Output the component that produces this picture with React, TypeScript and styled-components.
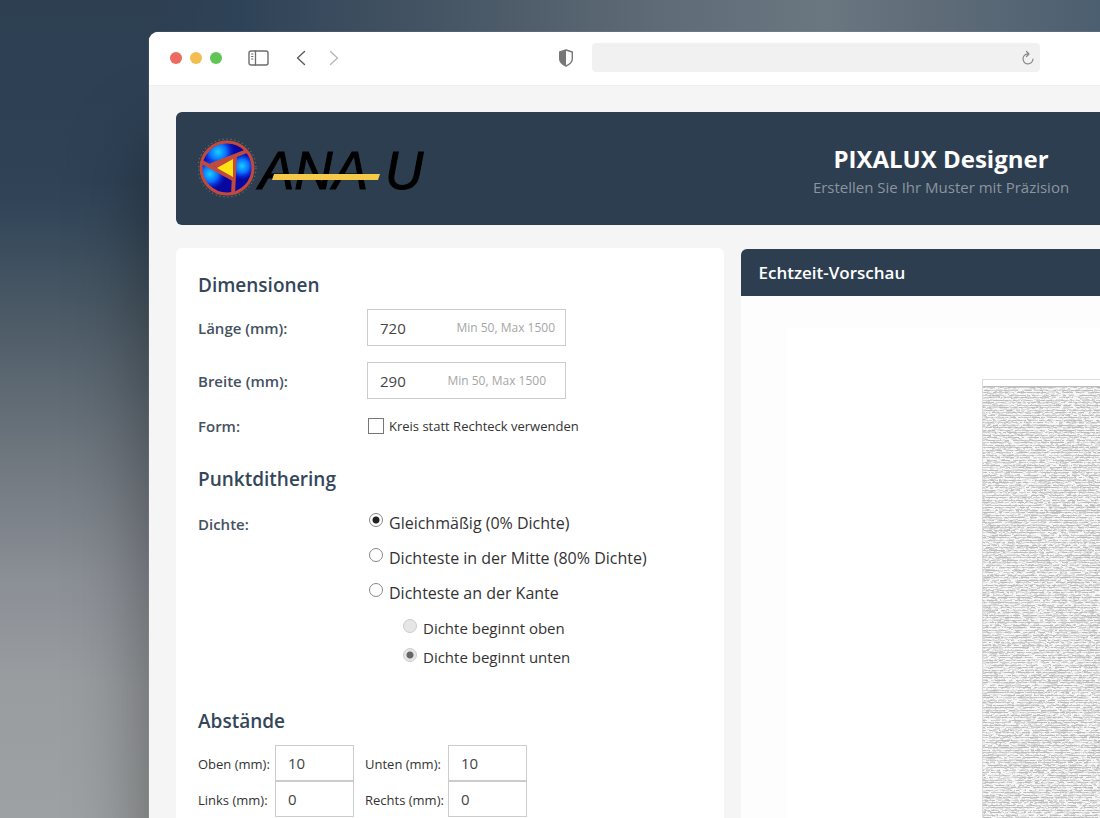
import React, { useState } from "react";
import styled, { createGlobalStyle } from "styled-components";

const navy = "#2d3e50";

const GlobalStyle = createGlobalStyle`
  * { box-sizing: border-box; }
  body {
    margin: 0;
    font-family: "Open Sans", "Noto Sans", sans-serif;
    color: #333;
  }
`;

const Desktop = styled.div`
  height: 100vh;
  overflow: hidden;
  padding: 32px 0 0 149px;
  background:
    linear-gradient(90deg, #2d3e5000 15%, #2f4358 22%, #465564 40%, #5f6c77 60%, #6a7680 75%, #5f6c78 85%, #4c5f70 100%) no-repeat 0 0 / 100% 48px,
    linear-gradient(180deg, #2d3f51 0, #2f4256 22%, #35485a 27%, #4a5965 38%, #6d757d 55%, #8b8f96 71%, #9a9da0 84%, #9ea1a3 100%);
`;

const Window = styled.div`
  width: 144vw;
  min-height: 100%;
  background: #f5f5f5;
  border-radius: 9px 9px 0 0;
  overflow: hidden;
  box-shadow: 0 0 1px rgba(255, 255, 255, 0.7), 0 110px 80px rgba(0, 0, 0, 0.4);
`;

const Toolbar = styled.div`
  display: flex;
  align-items: center;
  height: 54px;
  padding: 0 21px 2px;
  background: #fff;
  border-bottom: 1px solid #f0f0f0;
`;

const Lights = styled.div`
  display: flex;
  gap: 8px;
  margin-right: 26px;
`;

const Light = styled.span<{ $color: string }>`
  width: 12px;
  height: 12px;
  border-radius: 50%;
  background: ${(p) => p.$color};
`;

const IconButton = styled.button`
  display: flex;
  padding: 0;
  border: 0;
  background: none;
`;

const NavGroup = styled.div`
  display: flex;
  gap: 23px;
  margin: 0 219px 0 27px;
`;

const AddressBar = styled.div`
  display: flex;
  align-items: center;
  width: 448px;
  height: 29px;
  margin-left: 18px;
  padding-right: 5px;
  border-radius: 4px;
  background: #f1f1f1;
`;

const AddressInput = styled.input`
  flex: 1;
  min-width: 0;
  height: 100%;
  padding: 0 10px;
  border: 0;
  outline: 0;
  background: transparent;
  font: inherit;
  font-size: 13px;
`;

const Page = styled.div`
  padding: 26px 27px;
`;

const Header = styled.header`
  display: grid;
  grid-template-columns: 1fr auto 1fr;
  align-items: center;
  height: 113px;
  padding: 0 22px;
  border-radius: 6px;
  background: ${navy};
`;

const Titles = styled.div`
  text-align: center;
  padding-top: 4px;
`;

const AppTitle = styled.h1`
  margin: 0;
  color: #fff;
  font-size: 24px;
  font-weight: 700;
  line-height: 32px;
`;

const Tagline = styled.p`
  margin: 0;
  color: #8b959e;
  font-size: 15px;
  line-height: 24px;
`;

const Columns = styled.div`
  display: grid;
  grid-template-columns: 29fr 51fr;
  gap: 17px;
  margin-top: 23px;
`;

const Panel = styled.form`
  padding: 23px 22px 40px;
  border-radius: 6px;
  background: #fff;
`;

const Section = styled.section<{ $gap?: number }>`
  margin-bottom: ${(p) => p.$gap ?? 0}px;
`;

const SectionTitle = styled.h2`
  margin: 0 0 10px;
  color: #34465a;
  font-size: 19px;
  font-weight: 600;
  line-height: 28px;
`;

const Row = styled.div<{ $gap?: number }>`
  display: grid;
  grid-template-columns: 169px 1fr;
  align-items: center;
  margin-bottom: ${(p) => p.$gap ?? 0}px;
`;

const DensityRow = styled(Row)`
  align-items: start;
  padding-top: 3px;
`;

const FieldLabel = styled.label`
  color: #44525f;
  font-size: 15px;
  font-weight: 600;
  line-height: 36px;
`;

const FormLabel = styled.span`
  color: #44525f;
  font-size: 15px;
  font-weight: 600;
  line-height: 24px;
`;

const DensityLabel = styled(FormLabel)`
  line-height: 36px;
`;

const FieldBox = styled.div<{ $inset: number }>`
  display: flex;
  align-items: center;
  width: 199px;
  height: 37px;
  padding: 0 ${(p) => p.$inset}px 0 12px;
  border: 1px solid #ccc;
  background: #fff;
`;

const FieldInput = styled.input`
  flex: 1;
  min-width: 0;
  padding: 0;
  border: 0;
  outline: 0;
  color: #444;
  font: inherit;
  font-size: 15px;
`;

const Hint = styled.span`
  color: #a6a6a6;
  font-size: 12px;
  white-space: nowrap;
`;

const CheckOption = styled.label`
  display: flex;
  align-items: center;
  gap: 5px;
  padding-left: 1px;
  font-size: 13px;
  line-height: 24px;
`;

const Checkbox = styled.input`
  appearance: none;
  width: 16px;
  height: 16px;
  margin: 0;
  border: 1px solid #777;
  background: #fff;
  &:checked { background: ${navy}; }
`;

const Option = styled.label`
  display: flex;
  align-items: flex-start;
  gap: 6px;
  padding-left: 2px;
  color: #333;
  font-size: 16px;
  line-height: 35px;
`;

const SubOptions = styled.div`
  padding: 3px 0 0 34px;
`;

const SubOption = styled(Option)`
  font-size: 15px;
  line-height: 29px;
`;

const Radio = styled.input`
  appearance: none;
  width: 14px;
  height: 14px;
  margin: 7px 0 0;
  border: 1px solid #888;
  border-radius: 50%;
  background: #fff;
  &:checked { background: radial-gradient(circle, #222 0 3px, #fff 4px); }
  &:disabled { margin-top: 5px; border-color: #ccc; background: #e6e6e6; }
  &:disabled:checked { background: radial-gradient(circle, #666 0 3px, #e6e6e6 4px); }
`;

const Margins = styled.div`
  display: grid;
  grid-template-columns: 77px 79px 94px 79px;
  align-items: center;
`;

const MarginLabel = styled.label<{ $second?: boolean }>`
  padding: 2px 0 0 ${(p) => (p.$second ? 11 : 0)}px;
  font-size: 13px;
  line-height: 34px;
  white-space: nowrap;
`;

const MarginInput = styled.input`
  width: 79px;
  height: 36px;
  padding: 0 12px;
  border: 1px solid #ccc;
  outline: 0;
  background: #fff;
  color: #444;
  font: inherit;
  font-size: 15px;
`;

const Preview = styled.section`
  display: flex;
  flex-direction: column;
  margin-top: 1px;
  border-radius: 6px;
  overflow: hidden;
  background: #fdfdfd;
`;

const PreviewTitle = styled.h2`
  margin: 0;
  padding: 0 17px;
  background: ${navy};
  color: #fff;
  font-size: 17px;
  font-weight: 600;
  line-height: 47px;
`;

const PreviewStage = styled.div`
  flex: 1;
  display: flex;
  justify-content: center;
  margin: 32px 46px 0;
  padding-top: 51px;
  background: #fff;
`;

const Sheet = styled.svg`
  display: block;
  width: 484px;
  height: 600px;
  border: 1px solid #dcdcdc;
`;

/* Builds rows of short dashes for one tile of the dithering pattern. */
function ditherTile(width: number, height: number) {
  let seed = 7;
  const rand = () => {
    seed = (seed * 16807) % 2147483647;
    return seed / 2147483647;
  };
  const shades = ["", "", "", ""];
  for (let y = 0; y < height; y++) {
    const dense = y % 5 === 0 || y % 5 === 2;
    let x = 0;
    while (x < width) {
      const len = 1 + Math.floor(rand() * 3);
      const r = rand();
      const shade = dense ? (r < 0.4 ? 0 : r < 0.75 ? 1 : r < 0.9 ? 2 : 3) : r < 0.08 ? 1 : r < 0.45 ? 2 : 3;
      shades[shade] += `M${x} ${y}h${len}v1h-${len}z`;
      x += len;
    }
  }
  return shades;
}

const TILE_W = 240;
const TILE_H = 600;
const tile = ditherTile(TILE_W, TILE_H);
const tileColors = ["#bcbcbc", "#cecece", "#e0e0e0", "#f6f6f6"];

function DitherSheet() {
  return (
    <Sheet role="img" aria-label="Punktmuster">
      <defs>
        <pattern id="dither" width={TILE_W} height={TILE_H} patternUnits="userSpaceOnUse">
          {tile.map((d, i) => (
            <path key={i} d={d} fill={tileColors[i]} shapeRendering="crispEdges" />
          ))}
        </pattern>
      </defs>
      <rect width="100%" height="100%" fill="#fff" />
      <rect y="6" width="100%" height="594" fill="url(#dither)" />
      <rect y="6" width="100%" height="1" fill="#bcbcbc" />
    </Sheet>
  );
}

function Logo() {
  return (
    <svg width="230" height="62" viewBox="0 0 230 62" role="img" aria-label="ANA-U">
      <defs>
        <radialGradient id="glow">
          <stop offset="0" stopColor="#14d0ff" />
          <stop offset="0.5" stopColor="#0a6cff" />
          <stop offset="1" stopColor="#0a1fe0" stopOpacity="0" />
        </radialGradient>
        <clipPath id="ball"><circle cx="29" cy="30" r="25" /></clipPath>
      </defs>
      <circle cx="29" cy="30" r="29" fill="none" stroke="#8a8a78" strokeWidth="1" strokeDasharray="1 3" />
      <circle cx="29" cy="30" r="26" fill="#0808a0" />
      <g clipPath="url(#ball)">
        <circle cx="20" cy="14" r="17" fill="url(#glow)" />
        <circle cx="12" cy="36" r="16" fill="url(#glow)" />
        <circle cx="44" cy="28" r="14" fill="url(#glow)" />
        <path d="M4 24 35 41M13 27 49 13M37 17 35 57" stroke="#c24a3c" strokeWidth="4" fill="none" />
      </g>
      <path d="M14 26 37 17 35 43z" fill="#c24a3c" />
      <path d="M19 30 35 21V39z" fill="#ffe312" />
      <circle cx="29" cy="30" r="26" fill="none" stroke="#c24a3c" strokeWidth="3" />
      <g fontFamily="Liberation Sans, sans-serif" fontStyle="italic" fontSize="53" fill="#000" stroke="#000" strokeWidth="1">
        <text x="61" y="51">ANA</text>
        <text x="187" y="51">U</text>
      </g>
      <path d="M76 36H182L180 42H74z" fill="#f4c948" />
    </svg>
  );
}

const stroke = { fill: "none", strokeLinecap: "round", strokeLinejoin: "round" } as const;

function SidebarIcon() {
  return (
    <svg width="21" height="16" viewBox="0 0 21 16" {...stroke} stroke="#6c6c6c">
      <rect x="1" y="1" width="19" height="14" rx="2" strokeWidth="1.4" />
      <path d="M7.500 1v14" strokeWidth="1.3" />
      <path d="M3.500 4h1.500M3.500 6.500h1.500M3.500 9h1.500" strokeWidth="1" />
    </svg>
  );
}

function Chevron({ forward }: { forward?: boolean }) {
  return (
    <svg width="10" height="16" viewBox="0 0 10 16" {...stroke} stroke={forward ? "#b8b8b8" : "#5c5c5c"} strokeWidth="1.4">
      <path d={forward ? "M1.500 1.500 8.500 8l-7 6.500" : "M8.500 1.500 1.500 8l7 6.500"} />
    </svg>
  );
}

function ShieldIcon() {
  return (
    <svg width="16" height="18" viewBox="0 0 16 18">
      <path d="M8 1 14.300 3v7c0 3.500-3 5.500-6.300 7-3.300-1.500-6.300-3.500-6.300-7V3z" fill="#fff" stroke="#777" strokeWidth="1.400" strokeLinejoin="round" />
      <path d="M8 1v16c-3.300-1.500-6.300-3.500-6.300-7V3z" fill="#777" />
    </svg>
  );
}

function ReloadIcon() {
  return (
    <svg width="14" height="15" viewBox="0 0 14 15" {...stroke} stroke="#888" strokeWidth="1.200">
      <path d="M8 4A5 5 0 1 0 12 9M5.500 1.500 8 4 5.500 6.500" />
    </svg>
  );
}

interface SizeFieldProps {
  id: string;
  label: string;
  initial: string;
  inset: number;
  gap: number;
}

function SizeField({ id, label, initial, inset, gap }: SizeFieldProps) {
  const [value, setValue] = useState(initial);
  return (
    <Row $gap={gap}>
      <FieldLabel htmlFor={id}>{label}</FieldLabel>
      <FieldBox $inset={inset}>
        <FieldInput id={id} inputMode="numeric" value={value} onChange={(e) => setValue(e.target.value)} />
        <Hint>Min 50, Max 1500</Hint>
      </FieldBox>
    </Row>
  );
}

const densities = ["Gleichmäßig (0% Dichte)", "Dichteste in der Mitte (80% Dichte)", "Dichteste an der Kante"];
const edges = ["Dichte beginnt oben", "Dichte beginnt unten"];
const margins = [
  { id: "top", label: "Oben (mm):", value: "10" },
  { id: "bottom", label: "Unten (mm):", value: "10" },
  { id: "left", label: "Links (mm):", value: "0" },
  { id: "right", label: "Rechts (mm):", value: "0" },
];

export default function App() {
  const [density, setDensity] = useState(0);
  const [edge, setEdge] = useState(1);

  return (
    <Desktop>
      <GlobalStyle />
      <Window>
        <Toolbar>
          <Lights>
            <Light $color="#ec6a5f" />
            <Light $color="#f4bd50" />
            <Light $color="#61c455" />
          </Lights>
          <IconButton aria-label="Seitenleiste"><SidebarIcon /></IconButton>
          <NavGroup>
            <IconButton aria-label="Zurück"><Chevron /></IconButton>
            <IconButton aria-label="Vorwärts"><Chevron forward /></IconButton>
          </NavGroup>
          <IconButton aria-label="Datenschutz"><ShieldIcon /></IconButton>
          <AddressBar>
            <AddressInput aria-label="Adresse" />
            <IconButton aria-label="Neu laden"><ReloadIcon /></IconButton>
          </AddressBar>
        </Toolbar>
        <Page>
          <Header>
            <Logo />
            <Titles>
              <AppTitle>PIXALUX Designer</AppTitle>
              <Tagline>Erstellen Sie Ihr Muster mit Präzision</Tagline>
            </Titles>
          </Header>
          <Columns>
            <Panel>
              <Section $gap={27}>
                <SectionTitle>Dimensionen</SectionTitle>
                <SizeField id="length" label="Länge (mm):" initial="720" inset={10} gap={16} />
                <SizeField id="width" label="Breite (mm):" initial="290" inset={19} gap={15} />
                <Row>
                  <FormLabel>Form:</FormLabel>
                  <CheckOption>
                    <Checkbox type="checkbox" />
                    Kreis statt Rechteck verwenden
                  </CheckOption>
                </Row>
              </Section>
              <Section $gap={35}>
                <SectionTitle>Punktdithering</SectionTitle>
                <DensityRow role="radiogroup" aria-labelledby="density-label">
                  <DensityLabel id="density-label">Dichte:</DensityLabel>
                  <div>
                    {densities.map((text, i) => (
                      <Option key={text}>
                        <Radio type="radio" name="density" checked={density === i} onChange={() => setDensity(i)} />
                        {text}
                      </Option>
                    ))}
                    <SubOptions>
                      {edges.map((text, i) => (
                        <SubOption key={text}>
                          <Radio type="radio" name="edge" disabled={density !== 2} checked={edge === i} onChange={() => setEdge(i)} />
                          {text}
                        </SubOption>
                      ))}
                    </SubOptions>
                  </div>
                </DensityRow>
              </Section>
              <Section>
                <SectionTitle>Abstände</SectionTitle>
                <Margins>
                  {margins.map((m, i) => (
                    <React.Fragment key={m.id}>
                      <MarginLabel htmlFor={m.id} $second={i % 2 === 1}>{m.label}</MarginLabel>
                      <MarginInput id={m.id} inputMode="numeric" defaultValue={m.value} />
                    </React.Fragment>
                  ))}
                </Margins>
              </Section>
            </Panel>
            <Preview>
              <PreviewTitle>Echtzeit-Vorschau</PreviewTitle>
              <PreviewStage>
                <DitherSheet />
              </PreviewStage>
            </Preview>
          </Columns>
        </Page>
      </Window>
    </Desktop>
  );
}
